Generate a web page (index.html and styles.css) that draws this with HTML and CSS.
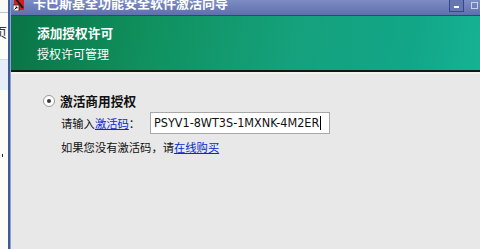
FILE: index.html
```html
<!DOCTYPE html>
<html lang="zh">
<head>
<meta charset="utf-8">
<link rel="stylesheet" href="styles.css">
</head>
<body>
<div class="screen">
  <div class="side">
    <div class="side-top"></div>
    <div class="side-page">页</div>
    <div class="side-sel"></div>
    <div class="side-rest"><span class="tick"></span></div>
  </div>
  <div class="win">
    <div class="titlebar">
      <svg class="app-icon" width="12" height="12" viewBox="0 0 12 12">
        <rect x="1" y="0" width="10" height="11" fill="#d42020"/>
        <path d="M3 0 L10 9" stroke="#1a1a1a" stroke-width="2"/>
        <rect x="0" y="6" width="6" height="6" fill="#ffffff" stroke="#222" stroke-width="0.8"/>
        <path d="M1.5 10.5 L4 8 M2.5 8 H4 V9.5" stroke="#000" stroke-width="1" fill="none"/>
      </svg>
      <span class="title">卡巴斯基全功能安全软件激活向导</span>
      <div class="tb-buttons">
        <span class="btn-min"><span class="dash"></span></span>
        <span class="btn-max"></span>
      </div>
    </div>
    <div class="header">
      <div class="h-title">添加授权许可</div>
      <div class="h-sub">授权许可管理</div>
    </div>
    <div class="content">
      <div class="radio-row">
        <span class="radio"><span class="dot"></span></span>
        <span class="radio-label">激活商用授权</span>
      </div>
      <div class="code-row">
        <span class="code-label">请输入<a class="link">激活码</a>：</span>
        <div class="code-input">PSYV1-8WT3S-1MXNK-4M2ER<span class="caret"></span></div>
      </div>
      <div class="buy-row">如果您没有激活码，请<a class="link">在线购买</a></div>
    </div>
  </div>
</div>
</body>
</html>
```
FILE: styles.css
```css
html, body {
  margin: 0;
  padding: 0;
}
body {
  width: 480px;
  height: 249px;
  overflow: hidden;
  font-family: "Noto Sans CJK SC", "DejaVu Sans", sans-serif;
  background: #ffffff;
}
.screen {
  display: flex;
  width: 480px;
  height: 249px;
}
.side {
  width: 8px;
  display: flex;
  flex-direction: column;
  background: #fdfdf8;
  overflow: hidden;
}
.side-top {
  height: 12px;
  border-bottom: 1px solid #b8c4d8;
  background: #f8f8f4;
}
.side-page {
  height: 47px;
  font-size: 13px;
  line-height: 13px;
  padding-top: 12px;
  box-sizing: border-box;
  margin-left: -6px;
  color: #333;
  border-bottom: 1px solid #d4dce8;
}
.side-sel {
  height: 30px;
  background: #e6eef8;
}
.side-rest {
  flex: 1;
  position: relative;
}
.tick {
  position: absolute;
  left: 2px;
  top: 64px;
  width: 1px;
  height: 3px;
  background: #222;
}
.win {
  flex: 1;
  display: flex;
  flex-direction: column;
  border-left: 2px solid #3c5a9c;
  box-shadow: inset 1px 0 0 #8ea2cc;
  padding-left: 1px;
}
.titlebar {
  height: 15px;
  display: flex;
  align-items: flex-start;
  background: linear-gradient(180deg, #7d8cc4 0%, #6a7bb6 60%, #5e70ad 100%);
  border-bottom: 1px solid #2d4676;
  padding-left: 2px;
  overflow: hidden;
}
.app-icon {
  flex: none;
  margin-top: -1px;
}
.title {
  margin-left: 8px;
  margin-top: -5px;
  font-size: 13px;
  line-height: 16px;
  font-weight: bold;
  color: #ffffff;
  white-space: nowrap;
}
.tb-buttons {
  margin-left: auto;
  display: flex;
  align-items: flex-start;
  gap: 7px;
  padding-right: 2px;
}
.btn-min {
  width: 15px;
  height: 12px;
  box-sizing: border-box;
  border: 1px solid #2f4a86;
  border-top: none;
  background: #6676b0;
  display: flex;
  align-items: center;
  justify-content: center;
}
.btn-min .dash {
  width: 5px;
  height: 2px;
  background: #ffffff;
  margin-top: 2px;
}
.btn-max {
  width: 7px;
  height: 7px;
  margin-top: 2px;
  border: 1px solid #c8d0ea;
  box-sizing: border-box;
}
.header {
  height: 56px;
  box-sizing: border-box;
  padding: 9px 0 0 26px;
  background: linear-gradient(100deg, #0a7446 0%, #10915f 30%, #15a17c 60%, #12a688 85%, #16b294 100%);
  border-bottom: 2px solid #101810;
  color: #ffffff;
}
.h-title {
  font-size: 12.7px;
  line-height: 16px;
  font-weight: bold;
}
.h-sub {
  font-size: 12px;
  line-height: 16px;
  margin-top: 5px;
}
.content {
  flex: 1;
  background: #e8e8e8;
  box-shadow: inset 0 2px 0 #f2f2ee;
  padding: 22px 0 0 32px;
  font-size: 11.3px;
  color: #111;
}
.radio-row {
  display: flex;
  align-items: center;
  height: 14px;
}
.radio {
  width: 12px;
  height: 12px;
  box-sizing: border-box;
  border: 1px solid #9a9a9a;
  border-radius: 50%;
  background: #ffffff;
  display: flex;
  align-items: center;
  justify-content: center;
}
.radio .dot {
  width: 4px;
  height: 4px;
  border-radius: 50%;
  background: #3a3a3a;
}
.radio-label {
  margin-left: 5px;
  font-size: 12.7px;
  font-weight: bold;
  line-height: 14px;
}
.code-row {
  display: flex;
  align-items: center;
  margin-top: 4px;
  padding-left: 18px;
}
.code-label {
  width: 89px;
  line-height: 14px;
}
.link {
  color: #0a2ad0;
  text-decoration: underline;
}
.code-input {
  width: 180px;
  height: 22px;
  box-sizing: border-box;
  border: 1px solid #a8a8a8;
  background: #ffffff;
  padding-left: 3px;
  font-family: "DejaVu Sans Condensed", "DejaVu Sans", sans-serif;
  font-size: 12.5px;
  line-height: 20px;
  color: #111;
  display: flex;
  align-items: center;
  white-space: nowrap;
}
.caret {
  width: 1px;
  height: 14px;
  background: #000;
  margin-left: 1px;
}
.buy-row {
  margin-top: 6px;
  padding-left: 18px;
  line-height: 14px;
}
```
